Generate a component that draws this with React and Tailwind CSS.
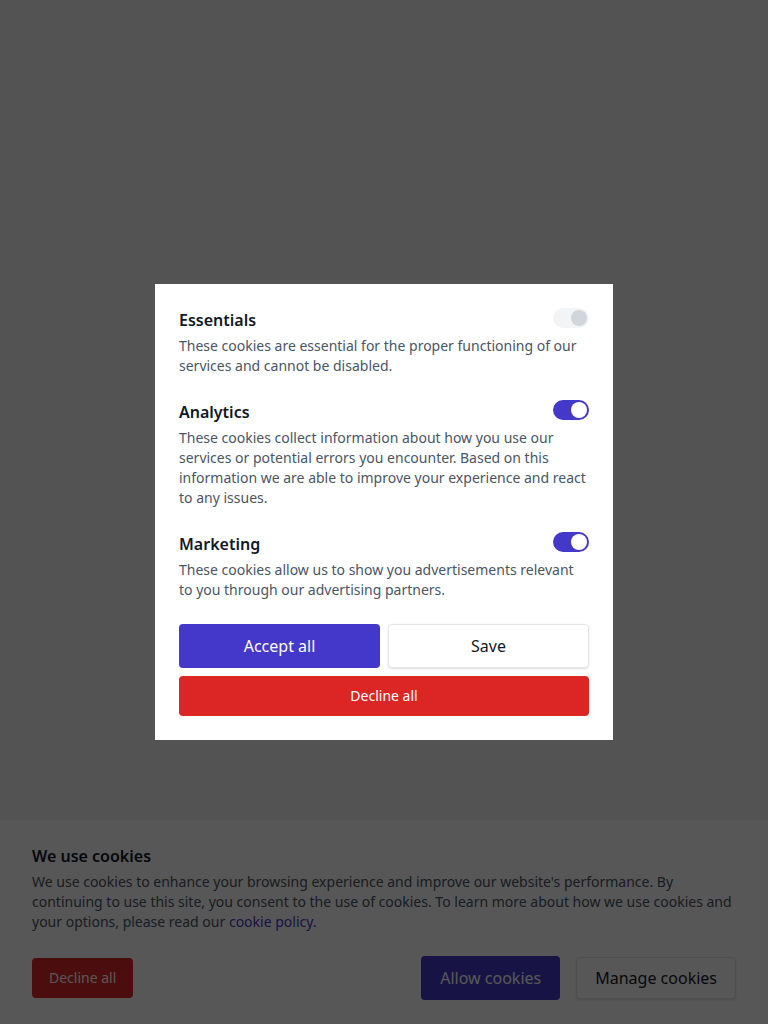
import { useState } from 'react';

function Toggle({ checked, disabled, onChange }) {
  return (
    <button
      type="button"
      role="switch"
      aria-checked={checked}
      disabled={disabled}
      onClick={() => onChange?.(!checked)}
      className={`flex h-5 w-9 shrink-0 items-center rounded-full p-0.5 ${
        disabled ? 'bg-gray-100' : checked ? 'bg-[#4338ca]' : 'bg-gray-200'
      } ${checked ? 'justify-end' : 'justify-start'}`}
    >
      <span className={`block h-4 w-4 rounded-full ${disabled ? 'bg-gray-300' : 'bg-white'}`} />
    </button>
  );
}

function Section({ title, text, checked, disabled, onChange }) {
  return (
    <div>
      <div className="flex items-start justify-between">
        <h3 className="text-base leading-6 font-semibold text-gray-900">{title}</h3>
        <Toggle checked={checked} disabled={disabled} onChange={onChange} />
      </div>
      <p className="mt-1 text-sm leading-5 text-gray-600">{text}</p>
    </div>
  );
}

export default function App() {
  const [analytics, setAnalytics] = useState(true);
  const [marketing, setMarketing] = useState(true);

  return (
    <div className="relative flex min-h-screen flex-col bg-gray-100" style={{ fontFamily: '"Noto Sans", "Open Sans", sans-serif' }}>
      <div className="flex-1" />

      {/* ── Cookie banner ── */}
      <div className="bg-white px-8 py-6">
        <h2 className="text-base leading-6 font-semibold text-gray-900">We use cookies</h2>
        <p className="mt-1 text-sm leading-5 text-gray-600">
          We use cookies to enhance your browsing experience and improve our website's performance. By continuing to use this site, you consent to the use of cookies. To learn more about how we use cookies and your options, please read our{' '}
          <a href="#" className="text-[#4338ca]">cookie policy.</a>
        </p>
        <div className="mt-6 flex items-center justify-between">
          <button className="h-10 rounded bg-[#dc2626] px-[17px] text-sm text-white">Decline all</button>
          <div className="flex items-center gap-4">
            <button className="h-11 rounded bg-[#4338ca] px-[19px] text-base text-white">Allow cookies</button>
            <button className="h-[42px] rounded border border-gray-200 bg-white px-4.5 text-base text-gray-900 shadow-sm">Manage cookies</button>
          </div>
        </div>
      </div>

      {/* ── Overlay + preferences dialog ── */}
      <div className="fixed inset-0 flex items-start justify-center bg-black/[0.66] pt-[284px]">
        <div role="dialog" aria-label="Cookie preferences" className="flex w-[458px] flex-col gap-6 bg-white p-6">
          <Section
            title="Essentials"
            text="These cookies are essential for the proper functioning of our services and cannot be disabled."
            checked
            disabled
          />
          <Section
            title="Analytics"
            text="These cookies collect information about how you use our services or potential errors you encounter. Based on this information we are able to improve your experience and react to any issues."
            checked={analytics}
            onChange={setAnalytics}
          />
          <Section
            title="Marketing"
            text="These cookies allow us to show you advertisements relevant to you through our advertising partners."
            checked={marketing}
            onChange={setMarketing}
          />
          <div className="flex flex-col gap-2">
            <div className="grid grid-cols-2 gap-2">
              <button className="h-11 rounded bg-[#4338ca] text-base text-white">Accept all</button>
              <button className="h-11 rounded border border-gray-200 bg-white text-base text-gray-900 shadow-sm">Save</button>
            </div>
            <button className="h-10 rounded bg-[#dc2626] text-sm text-white">Decline all</button>
          </div>
        </div>
      </div>
    </div>
  );
}
